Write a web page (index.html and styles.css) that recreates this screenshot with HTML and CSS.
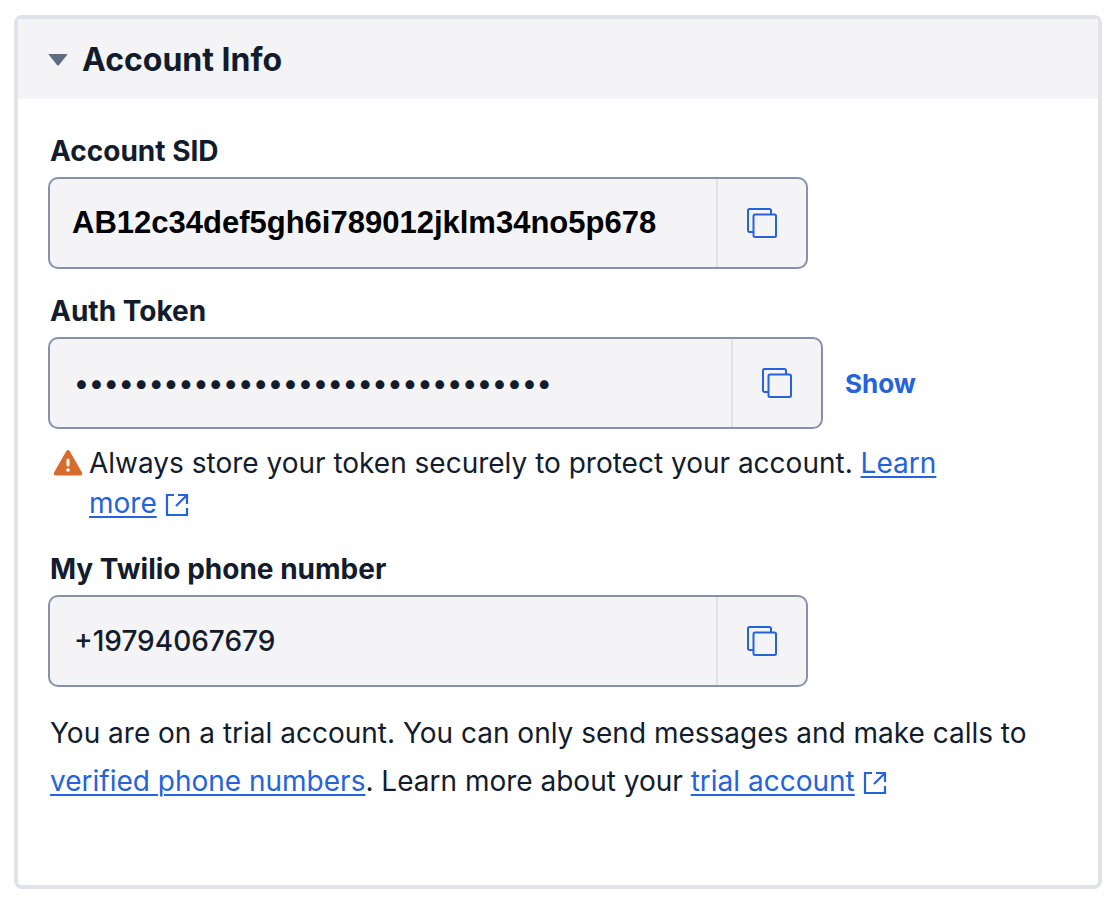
FILE: index.html
```html
<!DOCTYPE html>
<html lang="en">
<head>
    <meta charset="UTF-8">
    <meta name="viewport" content="width=device-width, initial-scale=1.0">
    <title>Account Info</title>
    <link rel="stylesheet" href="styles.css">
</head>
<body>
    <svg class="sprite" aria-hidden="true">
        <symbol id="copy" viewBox="0 0 32 32">
            <path d="M7 25H3.500A1.500 1.500 0 0 1 2 23.500V3.500A1.500 1.500 0 0 1 3.500 2H23.500A1.500 1.500 0 0 1 25 3.500V7" fill="none" stroke="currentColor" stroke-width="2"/>
            <rect x="7.500" y="7.500" width="22.500" height="22.500" rx="1.500" fill="none" stroke="currentColor" stroke-width="2"/>
        </symbol>
        <symbol id="external" viewBox="0 0 24 24">
            <path d="M9 2H2V22H22V15M13 2H22V11M22 2L11 13" fill="none" stroke="currentColor" stroke-width="2.200"/>
        </symbol>
    </svg>

    <main class="card">
        <button class="card-header" type="button" aria-expanded="true">
            <svg class="caret" viewBox="0 0 20 14" aria-hidden="true"><path d="M1 2H19Q20 2 19 3L11 13Q10 14 9 13L1 3Q0 2 1 2Z" fill="currentColor"/></svg>
            Account Info
        </button>

        <div class="card-body">
            <div class="field">
                <label for="sid">Account SID</label>
                <div class="copy-box">
                    <input class="sid" type="text" id="sid" value="AB12c34def5gh6i789012jklm34no5p678" readonly>
                    <button class="copy-button" type="button" aria-label="Copy account SID"><svg class="copy-icon"><use href="#copy"/></svg></button>
                </div>
            </div>

            <div class="field">
                <label for="token">Auth Token</label>
                <div class="token-row">
                    <div class="copy-box token-box">
                        <input type="text" id="token" value="••••••••••••••••••••••••••••••••" readonly>
                        <button class="copy-button" type="button" aria-label="Copy auth token"><svg class="copy-icon"><use href="#copy"/></svg></button>
                    </div>
                    <button class="show-button" type="button">Show</button>
                </div>
                <div class="warning">
                    <svg class="warning-icon" viewBox="0 0 30 26" aria-hidden="true">
                        <path d="M13.200 1.200Q15 -1 16.800 1.200L29 22.500Q30 25 27.500 25.500H2.500Q0 25 1 22.500Z" fill="#d66b2b"/>
                        <path d="M15 10V15" stroke="#fff" stroke-width="3" stroke-linecap="round"/>
                        <circle cx="15" cy="20" r="1.800" fill="#fff"/>
                    </svg>
                    <p>Always store your token securely to protect your account. <a href="#">Learn more</a> <svg class="external-icon"><use href="#external"/></svg></p>
                </div>
            </div>

            <div class="field">
                <label for="phone">My Twilio phone number</label>
                <div class="copy-box">
                    <input type="text" id="phone" value="+19794067679" readonly>
                    <button class="copy-button" type="button" aria-label="Copy phone number"><svg class="copy-icon"><use href="#copy"/></svg></button>
                </div>
            </div>

            <p class="trial">You are on a trial account. You can only send messages and make calls to <a href="#">verified phone numbers</a>. Learn more about your <a href="#">trial account</a> <svg class="external-icon"><use href="#external"/></svg></p>
        </div>
    </main>
</body>
</html>
```

FILE: styles.css
```css
* {
    box-sizing: border-box;
}

body {
    margin: 15px 14px;
    font-family: Inter, sans-serif;
    font-size: 28px;
    line-height: 40px;
    color: #121c2d;
    background-color: #fff;
}

p {
    margin: 0;
}

a {
    color: #2563db;
    text-decoration-thickness: 2px;
    text-underline-offset: 3px;
}

button {
    padding: 0;
    border: none;
    background: none;
    font-family: inherit;
    cursor: pointer;
}

.sprite {
    display: none;
}

.card {
    border: 4px solid #e1e3ea;
    border-radius: 8px;
    padding-bottom: 80px;
}

.card-header {
    display: flex;
    align-items: center;
    gap: 14px;
    width: 100%;
    height: 80px;
    padding: 0 30px;
    background-color: #f4f4f6;
    color: #121c2d;
    font-size: 32px;
    font-weight: 700;
}

.caret {
    width: 20px;
    height: 14px;
    color: #606b85;
}

.card-body {
    padding: 32px 30px 0;
}

.field {
    margin-bottom: 22px;
}

label {
    display: block;
    padding-left: 2px;
    margin-bottom: 6px;
    font-weight: 700;
}

.copy-box {
    display: flex;
    width: 100%;
    max-width: 760px;
    height: 92px;
    border: 2px solid #8891aa;
    border-radius: 10px;
    background-color: #f4f4f6;
    overflow: hidden;
}

.token-box {
    max-width: 775px;
}

input {
    flex: 1;
    min-width: 0;
    padding: 0 24px;
    border: none;
    background: none;
    color: #121c2d;
    font-family: inherit;
    font-size: 28px;
    font-weight: 500;
}

.sid {
    padding: 0 22px;
    color: #000;
    font-family: "Liberation Sans", sans-serif;
    font-size: 31px;
    font-weight: bold;
}

.copy-button {
    display: flex;
    align-items: center;
    justify-content: center;
    width: 90px;
    border-left: 2px solid #e1e3ea;
    color: #2563db;
}

.copy-icon {
    width: 32px;
    height: 32px;
}

.token-row {
    display: flex;
    align-items: center;
    gap: 22px;
}

.show-button {
    color: #2563db;
    font-size: 26px;
    font-weight: 700;
}

.warning {
    display: flex;
    gap: 6px;
    max-width: 900px;
    padding: 14px 0 4px 5px;
}

.warning-icon {
    flex: none;
    width: 30px;
    height: 26px;
    margin-top: 7px;
}

.external-icon {
    width: 24px;
    height: 24px;
    vertical-align: -4px;
    color: #2563db;
}

.trial {
    padding-left: 2px;
    line-height: 48px;
}
```
